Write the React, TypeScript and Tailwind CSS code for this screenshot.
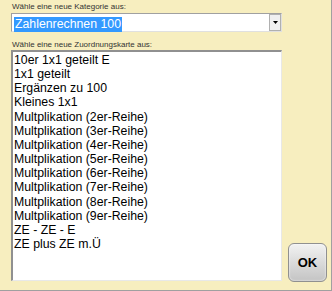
const items = [
  "10er 1x1 geteilt E",
  "1x1 geteilt",
  "Ergänzen zu 100",
  "Kleines 1x1",
  "Multplikation (2er-Reihe)",
  "Multplikation (3er-Reihe)",
  "Multplikation (4er-Reihe)",
  "Multplikation (5er-Reihe)",
  "Multplikation (6er-Reihe)",
  "Multplikation (7er-Reihe)",
  "Multplikation (8er-Reihe)",
  "Multplikation (9er-Reihe)",
  "ZE - ZE - E",
  "ZE plus ZE m.Ü",
];

export default function App() {
  return (
    <div className="w-[332px] h-[291px] bg-[#f7eebf] border-r border-b border-[#a0a0a0] flex font-['Liberation_Sans',Arial,sans-serif]">
      <div className="flex flex-col pl-[11px] pt-[2px]">
        <p className="text-[8px] leading-[10px] text-[#333] pl-[1px]">Wähle eine neue Kategorie aus:</p>
        <div className="mt-[1px] w-[271px] h-[19px] bg-white border border-t-[#a0a0a0] border-l-[#a0a0a0] border-r-[#e0e0e0] border-b-[#e0e0e0] flex items-center">
          <div className="flex-1 pl-[2px]">
            <span className="bg-[#3399ff] text-white text-[12.3px] leading-[15px] px-[1px] inline-block">Zahlenrechnen 100</span>
          </div>
          <div className="w-[12px] h-[17px] bg-[#f0f0f0] border border-[#b0b0b0] flex items-center justify-center">
            <svg width="5" height="3" viewBox="0 0 5 3"><path d="M0 0h5L2.5 3z" fill="#000" /></svg>
          </div>
        </div>
        <p className="mt-[8px] text-[8px] leading-[10px] text-[#333] pl-[1px]">Wähle eine neue Zuordnungskarte aus:</p>
        <div className="w-[271px] h-[231px] bg-white border-t-2 border-l-2 border-t-[#909090] border-l-[#909090] border-r border-b border-r-[#e8e8e8] border-b-[#e8e8e8] pl-[1px] pt-[1px]">
          {items.map((t) => (
            <div key={t} className="text-[12.3px] leading-[14.15px] text-black whitespace-nowrap">{t}</div>
          ))}
        </div>
      </div>
      <div className="flex-1 flex items-end justify-center pb-[8px] pl-[2px]">
        <button className="w-[39px] h-[39px] rounded-[6px] border border-[#909090] bg-gradient-to-b from-[#f2f2f2] to-[#c4c4c4] shadow-[inset_0_0_2px_#fff] text-[13px] font-bold text-black">OK</button>
      </div>
    </div>
  );
}
